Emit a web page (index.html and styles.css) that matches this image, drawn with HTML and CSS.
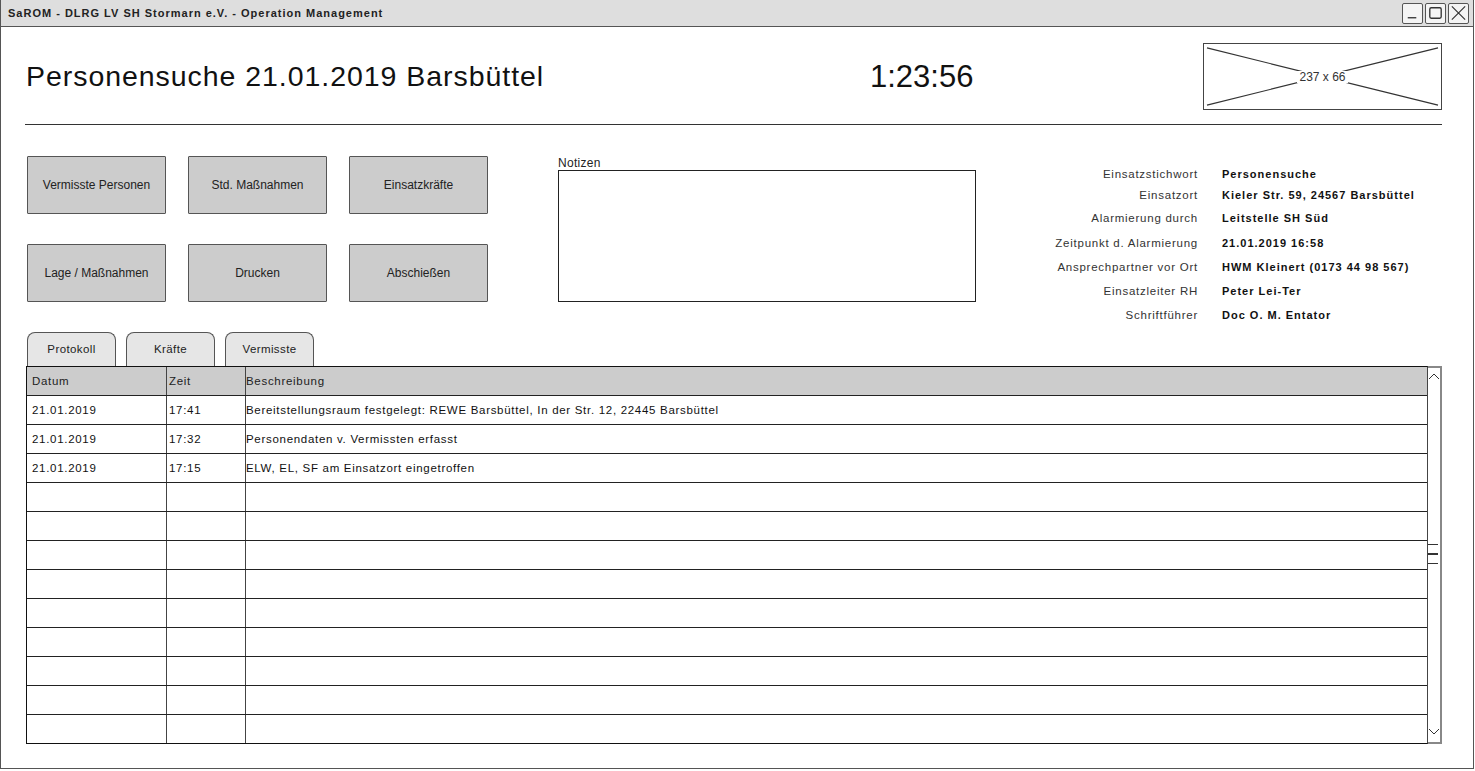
FILE: index.html
```html
<!DOCTYPE html>
<html lang="de">
<head>
<meta charset="utf-8">
<title>SaROM - Operation Management</title>
<link rel="stylesheet" href="styles.css">
</head>
<body>
<div class="window">
  <div class="titlebar">
    <span class="wintitle">SaROM - DLRG LV SH Stormarn e.V. - Operation Management</span>
    <div class="winbtns">
      <span class="winbtn"><svg viewBox="0 0 20 18" width="20" height="18"><path d="M5 14 H14" stroke="#333" stroke-width="1.4" fill="none"/></svg></span>
      <span class="winbtn"><svg viewBox="0 0 20 18" width="20" height="18"><rect x="4" y="3.5" width="12" height="11" rx="1.5" stroke="#333" stroke-width="1.4" fill="none"/></svg></span>
      <span class="winbtn"><svg viewBox="0 0 20 18" width="20" height="18"><path d="M3 2 L17 16 M17 2 L3 16" stroke="#333" stroke-width="1.2" fill="none"/></svg></span>
    </div>
  </div>

  <div class="content">
    <header class="head">
      <h1 class="heading">Personensuche 21.01.2019 Barsbüttel</h1>
      <div class="clock">1:23:56</div>
      <div class="placeholder">
        <svg class="ph-lines" viewBox="0 0 237 66" preserveAspectRatio="none">
          <path d="M3 4 L234 62 M234 4 L3 62" stroke="#333" stroke-width="1.2" fill="none"/>
        </svg>
        <span class="ph-label">237 x 66</span>
      </div>
    </header>

    <hr class="rule">

    <section class="mid">
      <div class="actions">
        <button class="btn">Vermisste Personen</button>
        <button class="btn">Std. Maßnahmen</button>
        <button class="btn">Einsatzkräfte</button>
        <button class="btn">Lage / Maßnahmen</button>
        <button class="btn">Drucken</button>
        <button class="btn">Abschießen</button>
      </div>

      <div class="notes">
        <div class="notes-label">Notizen</div>
        <div class="notes-box"></div>
      </div>

      <dl class="info">
        <dt>Einsatzstichwort</dt><dd>Personensuche</dd>
        <dt>Einsatzort</dt><dd>Kieler Str. 59, 24567 Barsbüttel</dd>
        <dt>Alarmierung durch</dt><dd>Leitstelle SH Süd</dd>
        <dt>Zeitpunkt d. Alarmierung</dt><dd>21.01.2019 16:58</dd>
        <dt>Ansprechpartner vor Ort</dt><dd>HWM Kleinert (0173 44 98 567)</dd>
        <dt>Einsatzleiter RH</dt><dd>Peter Lei-Ter</dd>
        <dt>Schriftführer</dt><dd>Doc O. M. Entator</dd>
      </dl>
    </section>

    <nav class="tabs">
      <span class="tab">Protokoll</span>
      <span class="tab">Kräfte</span>
      <span class="tab">Vermisste</span>
    </nav>

    <div class="grid-wrap">
      <div class="grid">
        <div class="row hdr"><div class="c1">Datum</div><div class="c2">Zeit</div><div class="c3">Beschreibung</div></div>
        <div class="row"><div class="c1">21.01.2019</div><div class="c2">17:41</div><div class="c3">Bereitstellungsraum festgelegt: REWE Barsbüttel, In der Str. 12, 22445 Barsbüttel</div></div>
        <div class="row"><div class="c1">21.01.2019</div><div class="c2">17:32</div><div class="c3">Personendaten v. Vermissten erfasst</div></div>
        <div class="row"><div class="c1">21.01.2019</div><div class="c2">17:15</div><div class="c3">ELW, EL, SF am Einsatzort eingetroffen</div></div>
        <div class="row"><div class="c1"></div><div class="c2"></div><div class="c3"></div></div>
        <div class="row"><div class="c1"></div><div class="c2"></div><div class="c3"></div></div>
        <div class="row"><div class="c1"></div><div class="c2"></div><div class="c3"></div></div>
        <div class="row"><div class="c1"></div><div class="c2"></div><div class="c3"></div></div>
        <div class="row"><div class="c1"></div><div class="c2"></div><div class="c3"></div></div>
        <div class="row"><div class="c1"></div><div class="c2"></div><div class="c3"></div></div>
        <div class="row"><div class="c1"></div><div class="c2"></div><div class="c3"></div></div>
        <div class="row"><div class="c1"></div><div class="c2"></div><div class="c3"></div></div>
        <div class="row"><div class="c1"></div><div class="c2"></div><div class="c3"></div></div>
      </div>
      <div class="scrollbar">
        <svg class="arrow" viewBox="0 0 12 8" width="12" height="8"><path d="M1 7 L6 2 L11 7" stroke="#333" stroke-width="1" fill="none"/></svg>
        <div class="grip"><span></span><span></span><span></span></div>
        <svg class="arrow" viewBox="0 0 12 8" width="12" height="8"><path d="M1 1 L6 6 L11 1" stroke="#333" stroke-width="1" fill="none"/></svg>
      </div>
    </div>
  </div>
</div>
</body>
</html>
```

FILE: styles.css
```css
* { box-sizing: border-box; }

html, body {
  margin: 0;
  padding: 0;
  background: #ffffff;
}

body {
  font-family: "Liberation Sans", Arial, sans-serif;
  color: #1a1a1a;
}

.window {
  width: 1474px;
  height: 769px;
  border: 1px solid #555;
  border-top: none;
  display: flex;
  flex-direction: column;
  overflow: hidden;
}

/* Title bar */
.titlebar {
  height: 27px;
  background: #dedede;
  border-bottom: 1px solid #555;
  display: flex;
  align-items: center;
  justify-content: space-between;
  padding: 0 4px 0 7px;
}

.wintitle {
  font-size: 11px;
  font-weight: bold;
  color: #222;
  letter-spacing: 1px;
}

.winbtns {
  display: flex;
  gap: 2px;
  align-items: center;
}

.winbtn {
  width: 21px;
  height: 21px;
  border: 1.5px solid #555;
  border-radius: 2px;
  background: #f4f4f4;
  display: flex;
  align-items: center;
  justify-content: center;
}

.winbtn svg { display: block; }

/* Content */
.content {
  flex: 1;
  padding: 0 31px 0 23px;
  display: flex;
  flex-direction: column;
}

.head {
  margin-top: 16px;
  height: 67px;
  display: grid;
  grid-template-columns: 846px 1fr 239px;
  align-items: center;
}

.heading {
  margin: 0 0 0 2px;
  font-size: 28.5px;
  font-weight: normal;
  color: #111;
  line-height: 1;
  letter-spacing: 0.95px;
  white-space: nowrap;
}

.clock {
  font-size: 31px;
  color: #111;
  line-height: 1;
}

.placeholder {
  display: grid;
  width: 239px;
  height: 67px;
  border: 1.5px solid #444;
}

.ph-lines {
  grid-area: 1 / 1;
  width: 100%;
  height: 100%;
  display: block;
}

.ph-label {
  grid-area: 1 / 1;
  place-self: center;
  font-size: 12px;
  color: #333;
  background: #fff;
  padding: 0 2px;
  line-height: 12px;
}

.rule {
  margin: 14px 0 0 1px;
  border: none;
  border-top: 1.5px solid #333;
  height: 0;
}

/* Middle area */
.mid {
  display: grid;
  grid-template-columns: 534px 418px 1fr;
  height: 207px;
}

.actions {
  display: grid;
  grid-template-columns: repeat(3, 139px);
  grid-template-rows: 58px 58px;
  column-gap: 22px;
  row-gap: 30px;
  padding: 31px 0 0 3px;
  align-content: start;
}

.btn {
  font-family: inherit;
  font-size: 12px;
  color: #222;
  background: #cccccc;
  border: 1.5px solid #555;
  border-radius: 1px;
  padding: 0;
  margin: 0;
}

.notes {
  padding-top: 32px;
  display: flex;
  flex-direction: column;
}

.notes-label {
  font-size: 12px;
  color: #222;
  line-height: 13px;
  letter-spacing: 0.3px;
}

.notes-box {
  height: 132px;
  border: 1.5px solid #222;
  background: #fff;
}

.info {
  margin: 0;
  padding-top: 38px;
  display: grid;
  grid-template-columns: 222px 1fr;
  grid-template-rows: 21px 22px 24px 25px 24px 24px 24px;
  column-gap: 24px;
  align-content: start;
  align-items: center;
}

.info dt {
  text-align: right;
  font-size: 11.5px;
  color: #333;
  letter-spacing: 0.75px;
}

.info dd {
  margin: 0;
  font-size: 11px;
  font-weight: bold;
  color: #111;
  letter-spacing: 1px;
  white-space: nowrap;
}

/* Tabs */
.tabs {
  display: flex;
  gap: 10px;
  padding-left: 3px;
  height: 34px;
  align-items: flex-end;
}

.tab {
  width: 89px;
  height: 34px;
  border: 1.5px solid #555;
  border-bottom: none;
  border-radius: 8px 8px 0 0;
  background: #e6e6e6;
  font-size: 11.5px;
  color: #222;
  letter-spacing: 0.4px;
  display: flex;
  align-items: center;
  justify-content: center;
  padding-bottom: 2px;
}

/* Table */
.grid-wrap {
  display: flex;
  margin-left: 2px;
  height: 378px;
}

.grid {
  flex: 1;
  border: 1px solid #111;
  border-right: 1.5px solid #444;
  display: flex;
  flex-direction: column;
}

.row {
  display: grid;
  grid-template-columns: 140px 79px 1fr;
  height: 29px;
  border-top: 1.5px solid #222;
  font-size: 11.5px;
  letter-spacing: 0.7px;
  color: #111;
}

.row:first-child { border-top: none; }

.row.hdr {
  height: 28px;
  background: #cccccc;
  color: #222;
}

.row > div {
  display: flex;
  align-items: center;
  white-space: nowrap;
}

.c1 {
  padding-left: 5px;
  border-right: 1.5px solid #444;
}

.c2 {
  padding-left: 2px;
  border-right: 1.5px solid #444;
}

.c3 { padding-left: 0; }

.scrollbar {
  width: 14px;
  border: 2px solid #888;
  border-left: none;
  display: flex;
  flex-direction: column;
  align-items: center;
  justify-content: space-between;
  padding: 4px 0 6px;
}

.arrow { display: block; }

.grip {
  display: flex;
  flex-direction: column;
  gap: 8px;
  margin-left: -2px;
}

.grip span {
  display: block;
  width: 10px;
  height: 1.5px;
  background: #333;
}
```
